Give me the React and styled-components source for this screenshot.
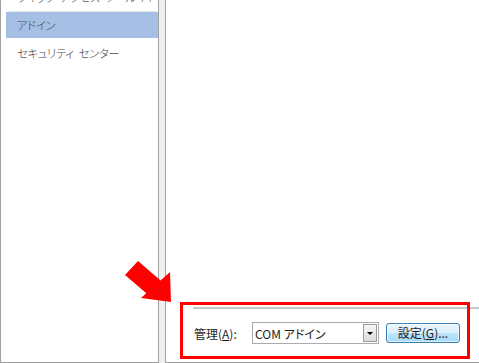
import React from "react";
import styled, { createGlobalStyle } from "styled-components";

const Global = createGlobalStyle`
  html, body { margin: 0; padding: 0; }
  body {
    background: #f0f0f0;
    overflow: hidden;
    font-family: "Noto Sans CJK JP", "Noto Sans", sans-serif;
    font-feature-settings: "palt";
  }
`;

const Page = styled.div`
  position: relative;
  display: flex;
  gap: 6px;
  width: 479px;
  height: 363px;
  overflow: hidden;
`;

const Sidebar = styled.div`
  box-sizing: border-box;
  width: 159px;
  height: 363px;
  background: #fff;
  border-left: 1px solid #a0a0a0;
  border-right: 1px solid #a0a0a0;
  border-bottom: 1px solid #a0a0a0;
  overflow: hidden;
  padding-left: 5px;
`;

const List = styled.ul`
  list-style: none;
  margin: -16px 0 0 0;
  padding: 0;
  display: flex;
  flex-direction: column;
  gap: 2px;
`;

const Item = styled.li`
  position: relative;
  height: 26px;
  display: flex;
  align-items: center;
  padding-left: 11px;
  font-size: 11.5px;
  font-weight: 300;
  letter-spacing: -0.5px;
  word-spacing: 3px;
  color: #474747;
  white-space: pre;
  background: ${(p) => (p.$selected ? "#a5bfe5" : "transparent")};
  ${(p) =>
    p.$separated &&
    `&::after {
      content: "";
      position: absolute;
      left: 3px;
      right: 2px;
      bottom: -2px;
      height: 1px;
      background: #e6e6e6;
    }`}
`;

const Main = styled.div`
  box-sizing: border-box;
  flex: 1;
  height: 363px;
  background: #fff;
  border-left: 1px solid #a0a0a0;
  border-bottom: 1px solid #a0a0a0;
  display: flex;
  flex-direction: column;
  justify-content: flex-end;
`;

const Footer = styled.div`
  padding: 0 0 18px 27px;
  display: flex;
  flex-direction: column;
`;

const Rule = styled.div`
  height: 2px;
  background: #c8c8c8;
  margin-bottom: 13px;
`;

const Row = styled.div`
  display: flex;
  align-items: center;
  height: 22px;
  padding-left: 1px;
`;

const Label = styled.span`
  font-size: 12px;
  color: #1e1e1e;
  width: 58px;
`;

const Combo = styled.div`
  box-sizing: border-box;
  width: 127px;
  height: 22px;
  border: 1px solid #a9abb0;
  background: #fff;
  display: flex;
  align-items: center;
  padding: 1px 1px 1px 2px;
`;

const ComboText = styled.span`
  flex: 1;
  font-size: 12px;
  color: #1e1e1e;
  white-space: nowrap;
`;

const DropButton = styled.div`
  box-sizing: border-box;
  width: 14px;
  height: 18px;
  border: 1px solid #9a9a9a;
  background: linear-gradient(#f6f6f6, #dcdcdc);
  display: flex;
  align-items: center;
  justify-content: center;
`;

const Triangle = styled.div`
  width: 0;
  height: 0;
  border-left: 3px solid transparent;
  border-right: 3px solid transparent;
  border-top: 3px solid #000;
`;

const Button = styled.button`
  box-sizing: border-box;
  margin-left: 7px;
  width: 74px;
  height: 20px;
  border: 1px solid #3c7fb1;
  border-radius: 3px;
  background: linear-gradient(#eaf6fd 0%, #d9f0fc 50%, #bee6fd 51%, #a7d9f5 100%);
  box-shadow: inset 0 0 0 1px rgba(255, 255, 255, 0.6);
  font-family: "Noto Sans CJK JP", "Noto Sans", sans-serif;
  font-feature-settings: "palt";
  font-size: 12px;
  color: #1e1e1e;
  padding: 0;
  display: flex;
  align-items: center;
  justify-content: center;
  line-height: 1;
`;

const Highlight = styled.div`
  position: absolute;
  left: 180px;
  top: 302px;
  width: 290px;
  height: 57px;
  box-sizing: border-box;
  border: 3px solid #ff0000;
  pointer-events: none;
`;

const ArrowSvg = styled.svg`
  position: absolute;
  left: 0;
  top: 0;
  pointer-events: none;
`;

export default function App() {
  return (
    <>
      <Global />
      <Page>
        <Sidebar>
          <List>
            <Item $separated>クイック アクセス ツール バー</Item>
            <Item $selected>アドイン</Item>
            <Item>セキュリティ センター</Item>
          </List>
        </Sidebar>
        <Main>
          <Footer>
            <Rule />
            <Row>
              <Label>
                管理(<u>A</u>):
              </Label>
              <Combo>
                <ComboText>COM アドイン</ComboText>
                <DropButton>
                  <Triangle />
                </DropButton>
              </Combo>
              <Button>
                設定(<u>G</u>)...
              </Button>
            </Row>
          </Footer>
        </Main>
        <Highlight />
        <ArrowSvg width="479" height="363" viewBox="0 0 479 363">
          <polygon
            points="138,261 160.6,280.4 170,272 171,302 141,298 146.3,293.3 125,275"
            fill="#ff0000"
          />
        </ArrowSvg>
      </Page>
    </>
  );
}
